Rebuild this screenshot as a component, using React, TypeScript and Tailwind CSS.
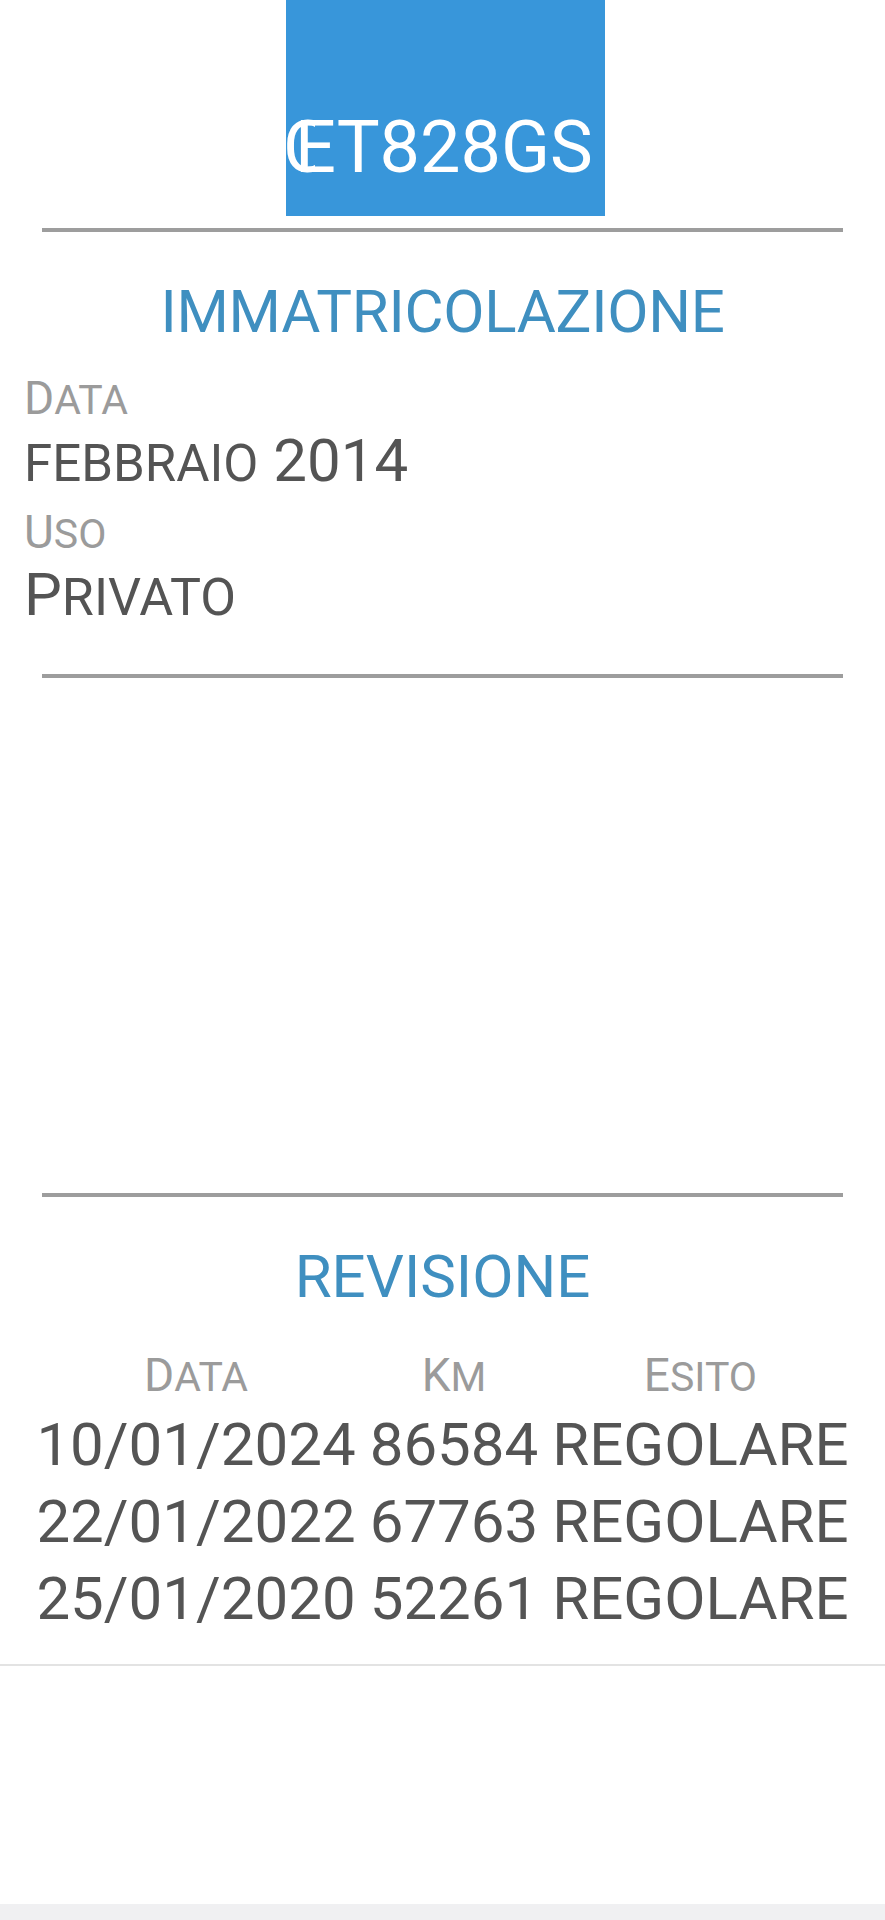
import React from "react";

type Revisione = { data: string; km: string; esito: string };

const revisioni: Revisione[] = [
  { data: "10/01/2024", km: "86584", esito: "REGOLARE" },
  { data: "22/01/2022", km: "67763", esito: "REGOLARE" },
  { data: "25/01/2020", km: "52261", esito: "REGOLARE" },
];

// label in "small caps": first letter full size, the rest uppercase and smaller
function Label({ first, rest }: { first: string; rest: string }) {
  return (
    <span className="text-[46px] leading-[46px] text-[#9b9b9b]">
      {first}
      <span className="text-[41px] leading-none">{rest}</span>
    </span>
  );
}

function Divider({ className = "" }: { className?: string }) {
  return <div className={`mx-[42px] h-[4px] bg-[#9d9d9d] ${className}`} />;
}

export default function App() {
  return (
    <div className="min-h-[1920px] flex flex-col bg-white font-['Roboto','Liberation_Sans',sans-serif]">
      {/* plate */}
      <div className="relative ml-[286px] w-[319px] h-[216px] overflow-hidden bg-[#3896da]">
        <div className="absolute left-[-3px] top-[112px] w-[32px] overflow-hidden text-[72px] leading-[72px] text-white">
          C
        </div>
        <div className="relative pl-[9px] pt-[112px] text-[72px] leading-[72px] text-white whitespace-nowrap">
          ET828GS
        </div>
      </div>

      <Divider className="mt-[12px]" />

      <h1 className="mt-[50px] text-center text-[60px] leading-[60px] font-normal text-[#3f8fc0] tracking-[-0.3px]">
        IMMATRICOLAZIONE
      </h1>

      <div className="px-[24px] flex flex-col">
        <div className="mt-[33px] h-[46px] leading-[46px]">
          <Label first="D" rest="ATA" />
        </div>
        <div className="mt-[10px] h-[60px] text-[60px] leading-[60px] text-[#545454]">
          <span className="text-[51px] leading-none">FEBBRAIO</span> 2014
        </div>
        <div className="mt-[18px] h-[46px] leading-[46px]">
          <Label first="U" rest="SO" />
        </div>
        <div className="mt-[10px] h-[60px] text-[60px] leading-[60px] text-[#545454]">
          P<span className="text-[52px] leading-none">RIVATO</span>
        </div>
      </div>

      <Divider className="mt-[49px]" />

      <div className="h-[515px]" />

      <Divider />

      <h2 className="mt-[50px] text-center text-[60px] leading-[60px] font-normal text-[#3f8fc0]">
        REVISIONE
      </h2>

      <div className="mt-[45px] flex justify-center">
        <div className="grid grid-cols-[auto_auto_auto] gap-x-[14px]">
          <div className="h-[46px] leading-[46px] text-center">
            <Label first="D" rest="ATA" />
          </div>
          <div className="h-[46px] leading-[46px] text-center">
            <Label first="K" rest="M" />
          </div>
          <div className="h-[46px] leading-[46px] text-center">
            <Label first="E" rest="SITO" />
          </div>
          <div className="col-span-3 h-[8px]" />
          {revisioni.map((r) => (
            <React.Fragment key={r.data}>
              <div className="h-[77px] text-center text-[60px] leading-[77px] text-[#545454]">{r.data}</div>
              <div className="h-[77px] text-center text-[60px] leading-[77px] text-[#545454]">{r.km}</div>
              <div className="h-[77px] text-center text-[60px] leading-[77px] text-[#545454]">{r.esito}</div>
            </React.Fragment>
          ))}
        </div>
      </div>

      <div className="mt-[27px] h-[2px] bg-[#e3e3e3]" />

      <div className="flex-1" />
      <div className="h-[16px] bg-[#f0f0f2]" />
    </div>
  );
}
